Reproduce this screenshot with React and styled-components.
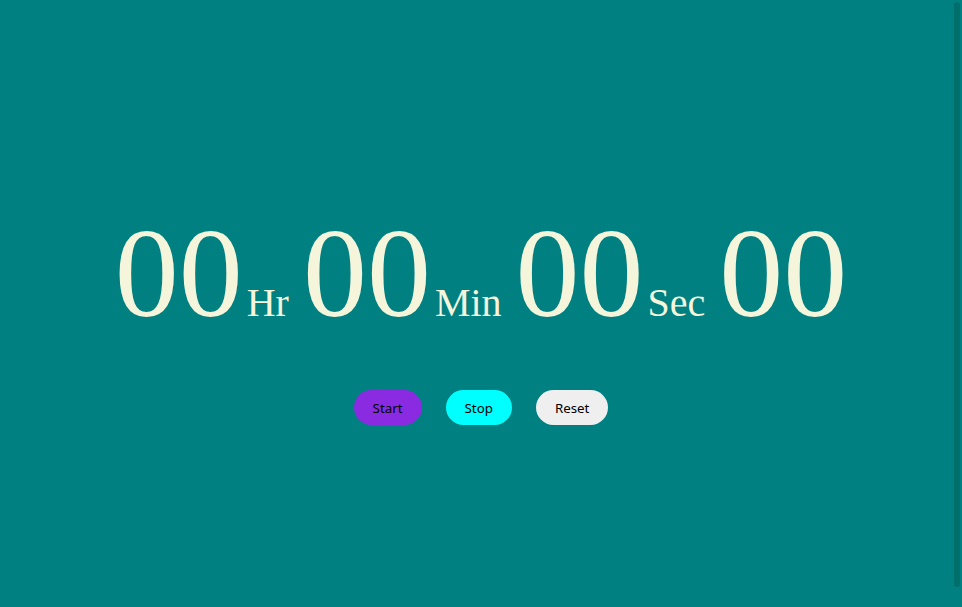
import React from "react";
import styled, { createGlobalStyle } from "styled-components";

const GlobalStyle = createGlobalStyle`
  html, body {
    margin: 0;
    padding: 0;
    overflow: hidden;
    background-color: #008080;
  }
`;

const Page = styled.div`
  min-height: 100vh;
  display: flex;
  flex-direction: column;
  align-items: center;
  justify-content: center;
  gap: 43px;
  padding-top: 18px;
  box-sizing: border-box;
`;

const Clock = styled.h1`
  margin: 0;
  display: flex;
  align-items: baseline;
  font-family: "Liberation Serif", "Times New Roman", serif;
  font-weight: normal;
  color: #f5f5dc;
  line-height: 1.15;
`;

const Digits = styled.span`
  font-size: 128px;
`;

const Unit = styled.span`
  font-size: 40px;
  margin: 0 14px 0 4px;
`;

const Controls = styled.div`
  display: flex;
  gap: 24px;
`;

const Button = styled.button`
  height: 35px;
  padding: 0 19px;
  border: none;
  border-radius: 18px;
  background-color: ${(props) => props.bg};
  color: #000;
  font-family: "Noto Sans", "Open Sans", sans-serif;
  font-size: 13.33px;
  cursor: pointer;
`;

const ScrollThumb = styled.div`
  position: fixed;
  top: 2px;
  right: 2px;
  width: 6px;
  height: 585px;
  border-radius: 3px;
  background-color: #006e6b;
`;

const units = ["Hr", "Min", "Sec"];

const App = () => {
  return (
    <>
      <GlobalStyle />
      <Page>
        <Clock>
          {units.map((u) => (
            <React.Fragment key={u}>
              <Digits>00</Digits>
              <Unit>{u}</Unit>
            </React.Fragment>
          ))}
          <Digits>00</Digits>
        </Clock>
        <Controls>
          <Button bg="#8a2be2">Start</Button>
          <Button bg="#00ffff">Stop</Button>
          <Button bg="#efefef">Reset</Button>
        </Controls>
      </Page>
      <ScrollThumb />
    </>
  );
};

export default App;
